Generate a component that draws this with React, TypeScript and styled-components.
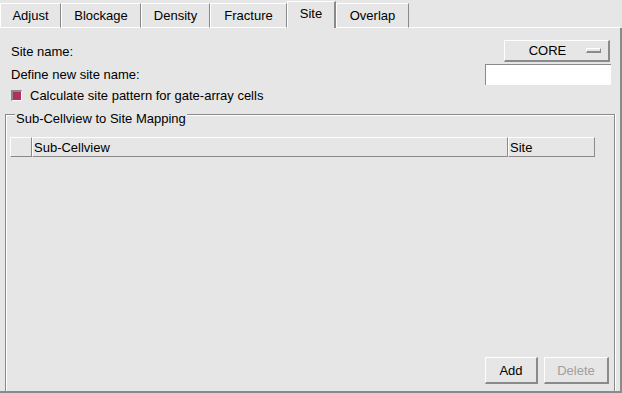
import styled, { createGlobalStyle } from "styled-components"

const GlobalStyle = createGlobalStyle`
  html, body {
    margin: 0;
    padding: 0;
    background: #e6e6e6;
  }
  body {
    font-family: "Liberation Sans", Arial, sans-serif;
    font-size: 13px;
    color: #000;
  }
`

const tabs = [
  { label: "Adjust", width: 61 },
  { label: "Blockage", width: 80 },
  { label: "Density", width: 69 },
  { label: "Fracture", width: 77 },
  { label: "Site", width: 49 },
  { label: "Overlap", width: 73 },
]

// 사이트 탭 화면
const App = () => {
  return (
    <>
      <GlobalStyle />
      <Window>
        <TabBar>
          {tabs.map((tab) => (
            <Tab key={tab.label} $width={tab.width} $active={tab.label === "Site"}>
              {tab.label}
            </Tab>
          ))}
          <TabFiller />
        </TabBar>
        <Pane>
          <Form>
            <FormRow $height={22}>
              <Label>Site name:</Label>
              <DropButton>
                <DropText>CORE</DropText>
                <DropMark />
              </DropButton>
            </FormRow>
            <FormRow $height={21}>
              <Label>Define new site name:</Label>
              <TextField />
            </FormRow>
            <CheckRow>
              <CheckBox />
              <Label>Calculate site pattern for gate-array cells</Label>
            </CheckRow>
          </Form>
          <GroupBox>
            <GroupTitle>Sub-Cellview to Site Mapping</GroupTitle>
            <TableHeader>
              <HeaderCell $width={22} />
              <HeaderCell $grow>Sub-Cellview</HeaderCell>
              <HeaderCell $width={87}>Site</HeaderCell>
            </TableHeader>
            <TableBody />
            <ButtonRow>
              <PushButton $width={53}>Add</PushButton>
              <PushButton $width={65} $disabled>
                Delete
              </PushButton>
            </ButtonRow>
          </GroupBox>
        </Pane>
      </Window>
    </>
  )
}

export default App

const Window = styled.div`
  width: 622px;
  height: 393px;
  display: flex;
  flex-direction: column;
  overflow: hidden;
`

const TabBar = styled.div`
  display: flex;
  align-items: flex-end;
  height: 28px;
  flex-shrink: 0;
`

const Tab = styled.div<{ $width: number; $active?: boolean }>`
  box-sizing: border-box;
  width: ${(p) => p.$width}px;
  height: ${(p) => (p.$active ? 27 : 25)}px;
  padding-bottom: ${(p) => (p.$active ? 3 : 0)}px;
  display: flex;
  align-items: center;
  justify-content: center;
  border-top: 1px solid #fff;
  border-left: 1px solid #fff;
  border-right: ${(p) => (p.$active ? 2 : 1)}px solid #8a8a8a;
  border-bottom: ${(p) => (p.$active ? "none" : "1px solid #fff")};
`

const TabFiller = styled.div`
  flex: 1;
  align-self: stretch;
  border-bottom: 1px solid #fff;
  margin-right: 2px;
`

const Pane = styled.div`
  flex: 1;
  display: flex;
  flex-direction: column;
  border-right: 2px solid #8a8a8a;
  border-bottom: 2px solid #8a8a8a;
  min-height: 0;
`

const Form = styled.div`
  display: flex;
  flex-direction: column;
  gap: 2px;
  padding: 12px 10px 0 11px;
`

const FormRow = styled.div<{ $height: number }>`
  display: flex;
  align-items: center;
  justify-content: space-between;
  height: ${(p) => p.$height}px;
`

const Label = styled.span`
  white-space: nowrap;
`

const DropButton = styled.div`
  box-sizing: border-box;
  width: 106px;
  height: 22px;
  display: flex;
  align-items: center;
  border-top: 1px solid #fff;
  border-left: 1px solid #fff;
  border-right: 2px solid #8a8a8a;
  border-bottom: 2px solid #8a8a8a;
`

const DropText = styled.span`
  flex: 1;
  text-align: center;
  padding-left: 4px;
`

const DropMark = styled.span`
  box-sizing: border-box;
  width: 15px;
  height: 5px;
  margin-right: 7px;
  background: #e6e6e6;
  border-top: 1px solid #fff;
  border-left: 1px solid #fff;
  border-right: 1px solid #8a8a8a;
  border-bottom: 2px solid #8a8a8a;
`

const TextField = styled.div`
  box-sizing: border-box;
  width: 126px;
  height: 21px;
  margin-right: -1px;
  background: #fff;
  border-top: 1px solid #8a8a8a;
  border-left: 1px solid #8a8a8a;
`

const CheckRow = styled.div`
  display: flex;
  align-items: center;
  gap: 8px;
  height: 16px;
`

const CheckBox = styled.span`
  box-sizing: border-box;
  width: 11px;
  height: 11px;
  background: #b0305f;
  border-top: 2px solid #8a8a8a;
  border-left: 2px solid #8a8a8a;
  border-right: 1px solid #fff;
  border-bottom: 1px solid #fff;
`

const GroupBox = styled.div`
  position: relative;
  flex: 1;
  display: flex;
  flex-direction: column;
  margin: 11px 5px 0 5px;
  padding: 22px 19px 7px 4px;
  border-top: 1px solid #8a8a8a;
  border-left: 1px solid #8a8a8a;
  border-right: 1px solid #8a8a8a;
  box-shadow: inset 1px 1px 0 #fff, 1px 0 0 #fff;
`

const GroupTitle = styled.span`
  position: absolute;
  top: -4px;
  left: 9px;
  padding: 0 1px;
  background: #e6e6e6;
  line-height: 16px;
`

const TableHeader = styled.div`
  display: flex;
  height: 20px;
`

const HeaderCell = styled.div<{ $width?: number; $grow?: boolean }>`
  box-sizing: border-box;
  ${(p) => (p.$grow ? "flex: 1;" : `width: ${p.$width}px;`)}
  display: flex;
  align-items: center;
  padding-left: 1px;
  border-top: 1px solid #fff;
  border-left: 1px solid #fff;
  border-right: 1px solid #8a8a8a;
  border-bottom: 1px solid #8a8a8a;
`

const TableBody = styled.div`
  flex: 1;
`

const ButtonRow = styled.div`
  display: flex;
  justify-content: flex-end;
  gap: 6px;
  margin-right: -14px;
`

const PushButton = styled.div<{ $width: number; $disabled?: boolean }>`
  box-sizing: border-box;
  width: ${(p) => p.$width}px;
  height: 27px;
  display: flex;
  align-items: center;
  justify-content: center;
  color: ${(p) => (p.$disabled ? "#a0a0a0" : "#000")};
  border-top: 1px solid #fff;
  border-left: 1px solid #fff;
  border-right: 2px solid #8a8a8a;
  border-bottom: 2px solid #8a8a8a;
`
